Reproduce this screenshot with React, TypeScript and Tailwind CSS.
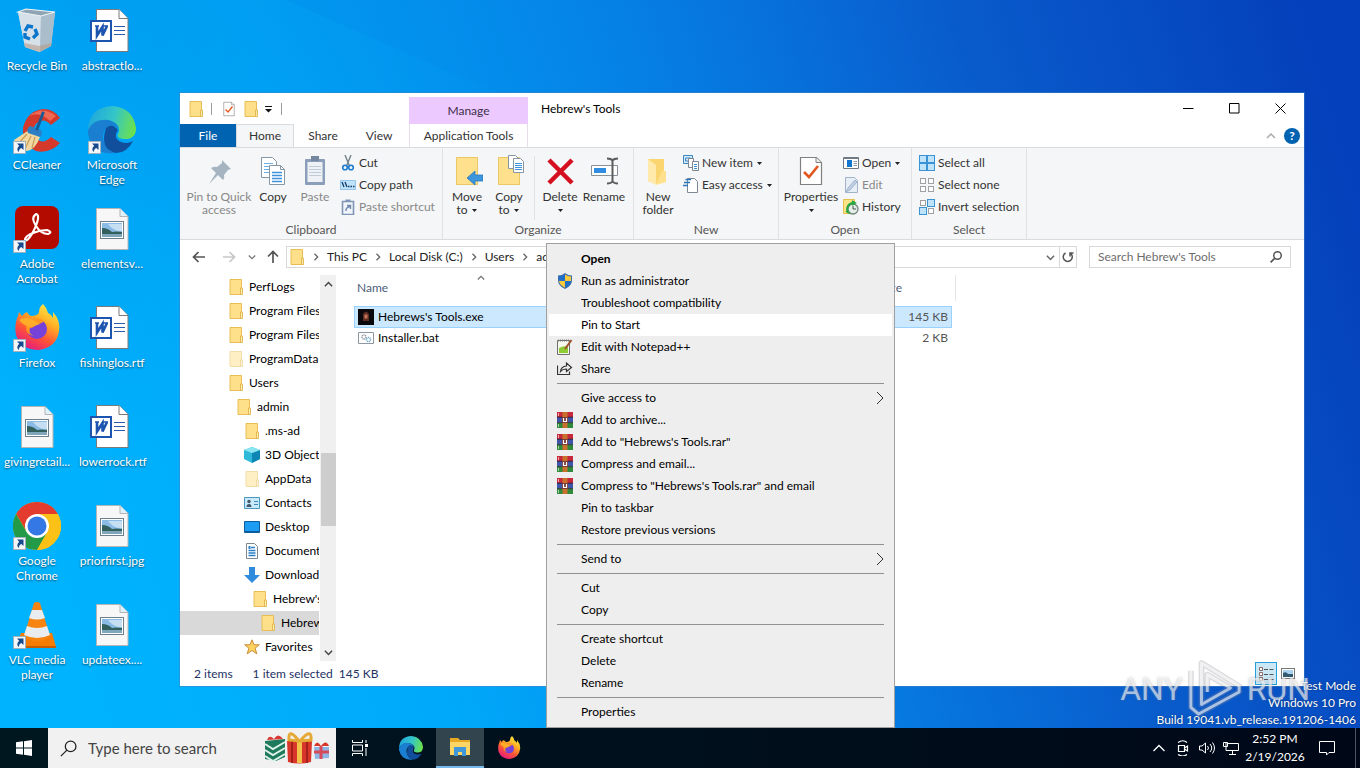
import React from 'react'

type IconProps = { className?: string }

export default function App() {
    return (
        <div className="flex h-screen min-h-[600px] flex-col overflow-hidden font-['Lato','Open_Sans',sans-serif] text-[12px] text-black">
            <main className="relative flex-1 bg-[#00aefd]">
                <Wallpaper />
                <DesktopIcons />
                <ExplorerWindow />
                <ContextMenu />
                <BuildInfo />
                <Watermark />
            </main>
            <Taskbar />
        </div>
    )
}

function Wallpaper() {
    return (
        <svg className="absolute inset-0 h-full w-full" viewBox="0 0 1360 728" preserveAspectRatio="none" aria-hidden="true">
            <defs>
                <linearGradient id="sky" x1="60" y1="600" x2="1360" y2="200" gradientUnits="userSpaceOnUse">
                    <stop offset="0" stopColor="#00b3fe" />
                    <stop offset=".25" stopColor="#00a9fa" />
                    <stop offset=".5" stopColor="#0584e7" />
                    <stop offset=".75" stopColor="#095ccc" />
                    <stop offset="1" stopColor="#0440bb" />
                </linearGradient>
                <radialGradient id="top" cx="100" cy="-60" r="520" gradientUnits="userSpaceOnUse">
                    <stop offset="0" stopColor="#0080dc" stopOpacity=".35" />
                    <stop offset="1" stopColor="#0080dc" stopOpacity="0" />
                </radialGradient>
                <linearGradient id="beam" x1="0" y1="0" x2="1" y2="0">
                    <stop offset="0" stopColor="#0078e0" stopOpacity=".15" />
                    <stop offset=".8" stopColor="#0078e0" stopOpacity="0" />
                </linearGradient>
            </defs>
            <rect width="1360" height="728" fill="url(#sky)" />
            <rect width="1360" height="728" fill="url(#top)" />
            <path d="M285 0L560 120H1100V0Z" fill="url(#beam)" />
        </svg>
    )
}

/* ---------- desktop ---------- */

const shortcuts = [
    { label: 'Recycle Bin', icon: <RecycleBin />, link: false },
    { label: 'CCleaner', icon: <CCleaner />, link: true },
    { label: 'Adobe Acrobat', icon: <Acrobat />, link: true },
    { label: 'Firefox', icon: <Firefox className="h-12 w-12" id="fx1" />, link: true },
    { label: 'givingretail...', icon: <PictureFile />, link: false },
    { label: 'Google Chrome', icon: <Chrome />, link: true },
    { label: 'VLC media player', icon: <Vlc />, link: true },
    { label: 'abstractlo...', icon: <WordFile />, link: false },
    { label: 'Microsoft Edge', icon: <Edge className="h-12 w-12" id="edge1" />, link: true },
    { label: 'elementsv...', icon: <PictureFile />, link: false },
    { label: 'fishinglos.rtf', icon: <WordFile />, link: false },
    { label: 'lowerrock.rtf', icon: <WordFile />, link: false },
    { label: 'priorfirst.jpg', icon: <PictureFile />, link: false },
    { label: 'updateex....', icon: <PictureFile />, link: false },
]

function DesktopIcons() {
    return (
        <div className="relative grid w-fit grid-flow-col grid-cols-[74px_74px] grid-rows-[repeat(7,99px)] gap-x-px">
            {shortcuts.map((s) => (
                <button key={s.label} className="flex flex-col items-center pt-[7px]">
                    <span className="relative mb-[3px] block h-12 w-12">
                        {s.icon}
                        {s.link && <ShortcutArrow />}
                    </span>
                    <span className="max-w-[66px] text-center leading-[15px] text-white [text-shadow:0_1px_2px_rgba(0,0,0,0.6)]">{s.label}</span>
                </button>
            ))}
        </div>
    )
}

function ShortcutArrow() {
    return (
        <svg className="absolute bottom-0 left-0 h-[13px] w-[13px]" viewBox="0 0 13 13">
            <rect x=".5" y=".5" width="12" height="12" fill="#f4f6f8" stroke="#9fb2c2" />
            <path d="M4 2.500h6.500V9L8.300 6.900Q5.500 8.500 6 11Q2.500 8.500 6.200 4.800Z" fill="#174a8c" />
        </svg>
    )
}

function RecycleBin() {
    return (
        <svg className="h-12 w-12" viewBox="0 0 48 48">
            <path d="M5 5l8-3 29 3-4 34-12 6-14-5z" fill="#c3d3dd" />
            <path d="M5 5l23 4-1 36-15-5z" fill="#d5e0e8" />
            <path d="M28 9l14-4-4 34-11 6z" fill="#a9bdcb" />
            <path d="M5 5l8-3 29 3-14 4z" fill="#8fa5b3" stroke="#eef3f5" strokeWidth="1.200" />
            <path d="M11 36l15 3 13-3-1 3-12 6-14-5z" fill="#b99b8b" opacity=".6" />
            <g fill="none" stroke="#0b76cc" strokeWidth="3.400">
                <path d="M12 24l3-5 5 1" />
                <path d="M22 22l2 5-4 4" />
                <path d="M17 32l-5-2v-4" />
            </g>
        </svg>
    )
}

function CCleaner() {
    return (
        <svg className="h-12 w-12" viewBox="0 0 48 48">
            <path d="M47 12L38 19Q31 11 24 17T25 34Q31 38 38 31L47 37Q37 48 23 45Q9 39 10 22Q14 5 30 3Q41 3 47 12Z" fill="#d5392b" />
            <path d="M43 10Q30-1 16 10Q27 5 37 15Z" fill="#ef6a54" />
            <path d="M16 24L1 34Q2 44 14 45Q22 44 27 31Z" fill="#f3d7a0" />
            <path d="M14 28L5 38M18 30L12 43M22 31L19 42" stroke="#c79c56" strokeWidth="1.200" />
            <path d="M17 20l11 4q2 4-1 7l-12-4q-2-4 2-7z" fill="#2d7fc4" />
            <path d="M24 23L30 7" stroke="#1c5a94" strokeWidth="3" strokeLinecap="round" />
        </svg>
    )
}

function Acrobat() {
    return (
        <svg className="h-12 w-12" viewBox="0 0 48 48">
            <rect x="2" y="1" width="44" height="43" rx="8" fill="#b30b00" />
            <path
                d="M22 10Q18 13 23 21Q28 29 35 29Q40 27 34 25Q27 25 20 28Q12 31 12 35Q14 37 19 29Q26 16 25 11Q24 8 22 10Z"
                fill="none" stroke="#fff" strokeWidth="2.200" strokeLinejoin="round"
            />
        </svg>
    )
}

function Firefox({ className, id }: { className: string; id: string }) {
    return (
        <svg className={className} viewBox="0 0 48 48">
            <defs>
                <linearGradient id={id} x1=".8" y1="0" x2=".25" y2="1">
                    <stop offset="0" stopColor="#fff14a" />
                    <stop offset=".35" stopColor="#ffae24" />
                    <stop offset=".65" stopColor="#ff5436" />
                    <stop offset="1" stopColor="#e31587" />
                </linearGradient>
            </defs>
            <path
                d="M30 0Q34 4 35 9Q38 10 40 14V8Q48 17 46 27Q44 43 26 46Q8 46 3 31Q1 20 5 12L6 8L9 12Q11 9 14 8Q16 12 19 12Q26 11 26 8Q26 3 30 0Z"
                fill={`url(#${id})`}
            />
            <circle cx="24" cy="25" r="10" fill="#7541d8" />
            <path d="M16 18Q23 11 31 17Q29 20 23 20Q21 24 17 24Q15 30 21 32Q13 31 13 23Q13 20 16 18Z" fill="#ff9620" />
            <path d="M6 16Q14 11 22 17L27 20Q22 22 18 23Q12 23 6 16Z" fill="#ffac28" />
        </svg>
    )
}

function Edge({ className, id }: { className: string; id: string }) {
    return (
        <svg className={className} viewBox="0 0 48 48">
            <defs>
                <linearGradient id={id} x1="0" y1=".4" x2="1" y2=".6">
                    <stop offset="0" stopColor="#1fa7dd" />
                    <stop offset=".5" stopColor="#34c5c8" />
                    <stop offset="1" stopColor="#6de24a" />
                </linearGradient>
            </defs>
            <path d="M0 24Q1 1 25 0Q45 2 48 22Q48 34 35 33Q27 32 31 26Q32 17 20 14Q7 13 0 24Z" fill={`url(#${id})`} />
            <path d="M0 24Q6 12 20 14Q29 16 31 23Q24 16 18 22Q11 31 20 43Q23 46 28 47Q5 50 0 28Z" fill="#1a7fd0" />
            <path d="M18 22Q24 16 30 24Q25 31 31 35Q38 39 45 35Q39 47 28 47Q11 43 18 22Z" fill="#114f9d" />
        </svg>
    )
}

function Chrome() {
    return (
        <svg className="h-12 w-12" viewBox="0 0 48 48">
            <circle cx="24" cy="24" r="24" fill="#fbc116" />
            <path d="M3.200 12A24 24 0 0 1 44.800 12H24L14 30Z" fill="#e33b2e" />
            <path d="M3.200 12A24 24 0 0 0 24 48L34.400 30H13.600Z" fill="#229a47" />
            <path d="M44.800 12A24 24 0 0 1 24 48L34.400 30V18L24 12Z" fill="#fbc116" />
            <circle cx="24" cy="24" r="12" fill="#fff" />
            <circle cx="24" cy="24" r="9.500" fill="#3478e5" />
        </svg>
    )
}

function Vlc() {
    return (
        <svg className="h-12 w-12" viewBox="0 0 48 48">
            <path d="M8 32h31l4 14H3z" fill="#f57c00" />
            <path d="M3 45h40v2H3z" fill="#c85d00" />
            <path d="M21 2Q24 0 27 2L37 35Q24 46 11 35Z" fill="#f78411" />
            <path d="M19 9h10l3 8q-8 3-16 0z" fill="#e9edf0" />
            <path d="M14 25q10 4 20 0l3 9q-13 6-26 0z" fill="#e9edf0" />
        </svg>
    )
}

function PictureFile() {
    return (
        <svg className="h-12 w-12" viewBox="0 0 48 48">
            <path d="M8.500 3.500H32l8 8v33H8.500z" fill="#f7f7f7" stroke="#b5b5b5" />
            <path d="M32 3.500v8h8" fill="#dff1fb" stroke="#b5b5b5" />
            <rect x="12.500" y="16.500" width="23" height="17" fill="#fff" stroke="#6d7f8c" />
            <path d="M14 18h20v14H14z" fill="#8abbe4" />
            <path d="M20 19h14v7q-8 1-14-7z" fill="#c5def2" />
            <path d="M14 23q6 0 10 4 4-1 10 0v3H14z" fill="#33605c" />
            <path d="M14 29h20v3H14z" fill="#7fa6bb" />
        </svg>
    )
}

function WordFile() {
    return (
        <svg className="h-12 w-12" viewBox="0 0 48 48">
            <path d="M8.500 2.500H31l9 9v33H8.500z" fill="#fff" stroke="#7a7a7a" />
            <path d="M31 2.500v9h9" fill="#fff" stroke="#7a7a7a" />
            <path d="M26 19.500h11M26 23.500h11M26 27.500h11" stroke="#2b5cad" />
            <rect x="3" y="14" width="20" height="20" fill="#fff" stroke="#1c54b0" strokeWidth="2" />
            <path d="M7 19h4M14 19h6" stroke="#1c54b0" strokeWidth="1.500" />
            <path d="M9 19v9.500L14.500 20v8.500L19 19" fill="none" stroke="#1c54b0" strokeWidth="2.600" />
        </svg>
    )
}

/* ---------- explorer window ---------- */

function ExplorerWindow() {
    return (
        <section className="absolute top-[93px] right-14 bottom-[42px] left-[180px] flex flex-col overflow-hidden bg-white shadow-[0_0_0_1px_rgba(70,130,190,0.5)]">
            <TitleBar />
            <RibbonTabs />
            <Ribbon />
            <AddressBar />
            <div className="flex min-h-0 flex-1">
                <FolderTree />
                <FileList />
            </div>
            <StatusBar />
        </section>
    )
}

function TitleBar() {
    return (
        <header className="flex h-[31px] shrink-0 pr-px">
            <div className="flex w-[229px] items-center pl-2">
                <Folder />
                <span className="ml-[7px] h-3 w-px bg-[#9a9a9a]" />
                <span className="ml-[9px]"><PropertiesPage className="h-4 w-4" /></span>
                <button className="ml-[6px]" aria-label="New folder"><Folder /></button>
                <button className="ml-[2px] flex h-4 w-4 items-center justify-center" aria-label="Customize toolbar">
                    <svg className="h-2 w-2" viewBox="0 0 8 8"><path d="M0 1.500h7" stroke="#111" /><path d="M0 4h7L3.500 7.500z" fill="#111" /></svg>
                </button>
                <span className="ml-1 h-3 w-px bg-[#9a9a9a]" />
            </div>
            <div className="mt-1 flex w-[119px] items-center justify-center bg-[#ecc9ff] text-[#40304a]">Manage</div>
            <h1 className="flex flex-1 items-center pl-[13px]">Hebrew's Tools</h1>
            <button className="w-[46px]" aria-label="Minimize">
                <svg className="mx-auto h-[11px] w-[11px]" viewBox="0 0 11 11"><path d="M0 5.500h10.500" stroke="#000" /></svg>
            </button>
            <button className="w-[46px]" aria-label="Maximize">
                <svg className="mx-auto h-[11px] w-[11px]" viewBox="0 0 11 11"><path d="M.5.5h9.500v9.500H.5z" fill="none" stroke="#000" /></svg>
            </button>
            <button className="w-[46px]" aria-label="Close">
                <svg className="mx-auto h-[11px] w-[11px]" viewBox="0 0 11 11"><path d="M.5.5l10 10M10.500.5l-10 10" stroke="#000" /></svg>
            </button>
        </header>
    )
}

function RibbonTabs() {
    return (
        <div className="flex h-[23px] shrink-0 text-[#333]">
            <div className="flex w-[229px]">
                <button className="w-14 bg-[#0063b1] text-white">File</button>
                <button className="w-[58px] border-x border-t border-[#dadbdc] bg-[#f5f6f7]">Home</button>
                <button className="w-[58px]">Share</button>
                <button className="w-[54px]">View</button>
            </div>
            <button className="w-[119px] border-x border-[#e6dcea]">Application Tools</button>
            <div className="flex flex-1 items-center justify-end gap-2 pr-1">
                <button aria-label="Collapse ribbon">
                    <svg className="h-2 w-[10px]" viewBox="0 0 10 8"><path d="M1 6l4-4 4 4" fill="none" stroke="#aaa" strokeWidth="1.500" /></svg>
                </button>
                <button className="h-4 w-4 rounded-full bg-[#0063b1] text-[12px] leading-4 font-bold text-white" aria-label="Help">?</button>
            </div>
        </div>
    )
}

function Ribbon() {
    return (
        <div className="flex h-[93px] shrink-0 border-y border-[#dadbdc] bg-[#f5f6f7] text-[#333]">
            <Group name="Clipboard" className="w-[263px]">
                <Big width="w-[72px]" icon={<PinIcon />} label="Pin to Quick access" disabled />
                <Big width="w-9" icon={<CopyIcon />} label="Copy" />
                <Big width="w-12" icon={<PasteIcon />} label="Paste" disabled />
                <div className="ml-px">
                    <Small icon={<Scissors />} label="Cut" />
                    <Small icon={<PathIcon />} label="Copy path" />
                    <Small icon={<PasteLink />} label="Paste shortcut" disabled />
                </div>
            </Group>
            <Group name="Organize" className="w-[191px]">
                <Big width="w-[42px] px-1" icon={<MoveTo />} label="Move to" arrow />
                <Big width="w-[42px] px-1" icon={<CopyTo />} label="Copy to" arrow />
                <span className="mx-1 mt-1 h-16 w-px bg-[#e0e1e2]" />
                <Big width="w-[42px]" icon={<DeleteIcon />} label="Delete" arrow />
                <Big width="w-[46px]" icon={<RenameIcon />} label="Rename" />
            </Group>
            <Group name="New" className="w-[145px]">
                <Big width="w-[42px]" icon={<NewFolder />} label="New folder" />
                <div className="ml-1">
                    <Small icon={<NewItem />} label="New item" arrow />
                    <Small icon={<EasyAccess />} label="Easy access" arrow />
                </div>
            </Group>
            <Group name="Open" className="w-[133px]">
                <Big width="w-[58px]" icon={<PropertiesPage className="h-8 w-8" />} label="Properties" arrow />
                <div className="ml-[3px]">
                    <Small icon={<OpenIcon />} label="Open" arrow />
                    <Small icon={<EditIcon />} label="Edit" disabled />
                    <Small icon={<HistoryIcon />} label="History" />
                </div>
            </Group>
            <Group name="Select" className="w-[115px]">
                <div className="ml-1">
                    <Small icon={<Tiles kind="all" />} label="Select all" />
                    <Small icon={<Tiles kind="none" />} label="Select none" />
                    <Small icon={<Tiles kind="invert" />} label="Invert selection" />
                </div>
            </Group>
        </div>
    )
}

function Group({ name, className, children }: { name: string; className: string; children: React.ReactNode }) {
    return (
        <div className={`flex shrink-0 flex-col border-r border-[#e0e1e2] pt-1 ${className}`}>
            <div className="flex flex-1 items-start pl-[3px]">{children}</div>
            <div className="h-[18px] text-center leading-[18px] text-[#555]">{name}</div>
        </div>
    )
}

type ButtonProps = { icon: React.ReactNode; label: string; arrow?: boolean; disabled?: boolean }

function Big({ icon, label, arrow, disabled, width }: ButtonProps & { width: string }) {
    return (
        <button className={`flex shrink-0 flex-col items-center pt-[3px] ${width} ${disabled ? 'text-[#888]' : ''}`}>
            <span className="mb-[3px] block h-8 w-8">{icon}</span>
            <span className="text-center leading-[13px]">
                {label}
                {arrow && <> <Caret /></>}
            </span>
        </button>
    )
}

function Small({ icon, label, arrow, disabled }: ButtonProps) {
    return (
        <button className={`flex h-[22px] items-center gap-[3px] whitespace-nowrap ${disabled ? 'text-[#888]' : ''}`}>
            <span className="block h-4 w-4">{icon}</span>
            {label}
            {arrow && <Caret />}
        </button>
    )
}

function Caret() {
    return <svg className="mx-px inline-block h-[3px] w-[5px] align-middle" viewBox="0 0 5 3"><path d="M0 0h5L2.500 3z" fill="#222" /></svg>
}

function AddressBar() {
    const crumbs = ['This PC', 'Local Disk (C:)', 'Users', 'admin']
    return (
        <div className="flex h-[35px] shrink-0 items-center pr-[13px] pb-px pl-3 text-[#222]">
            <button aria-label="Back"><Arrow className="h-[14px] w-[14px] text-[#555]" /></button>
            <button className="ml-4" aria-label="Forward"><Arrow className="h-[14px] w-[14px] rotate-180 text-[#c8c8c8]" /></button>
            <button className="ml-3" aria-label="Recent"><Chevron className="h-2 w-2 rotate-90 text-[#777]" /></button>
            <button className="ml-[10px]" aria-label="Up"><Arrow className="h-[14px] w-[14px] rotate-90 text-[#555]" /></button>
            <div className="ml-[6px] flex h-[22px] flex-1 items-center border border-[#d9d9d9] pl-[2px]">
                <Folder />
                {crumbs.map((c) => (
                    <React.Fragment key={c}>
                        <span className="flex w-[22px] shrink-0 justify-center"><Chevron className="h-2 w-2 text-[#666]" /></span>
                        <a href="#" className="whitespace-nowrap">{c}</a>
                    </React.Fragment>
                ))}
                <span className="flex-1" />
                <button className="px-1" aria-label="Previous locations"><Chevron className="h-[9px] w-[9px] rotate-90 text-[#666]" /></button>
                <button className="flex h-full w-[17px] items-center justify-center border-l border-[#d9d9d9]" aria-label="Refresh">
                    <svg className="h-3 w-3" viewBox="0 0 12 12"><path d="M3.500 2A4.500 4.500 0 1 0 8 2M8 5.500V2h3.500" fill="none" stroke="#555" strokeWidth="1.500" /></svg>
                </button>
            </div>
            <div className="ml-3 flex h-[22px] w-[202px] items-center border border-[#d9d9d9] pr-2 pl-2">
                <input className="min-w-0 flex-1 outline-none placeholder:text-[#6d6d6d]" placeholder="Search Hebrew's Tools" aria-label="Search Hebrew's Tools" />
                <Magnifier className="h-3 w-3 text-[#555]" />
            </div>
        </div>
    )
}

const tree = [
    { name: 'PerfLogs', indent: 'pl-12', icon: <Folder /> },
    { name: 'Program Files', indent: 'pl-12', icon: <Folder /> },
    { name: 'Program Files (x86)', indent: 'pl-12', icon: <Folder /> },
    { name: 'ProgramData', indent: 'pl-12', icon: <Folder faded /> },
    { name: 'Users', indent: 'pl-12', icon: <Folder /> },
    { name: 'admin', indent: 'pl-14', icon: <Folder /> },
    { name: '.ms-ad', indent: 'pl-16', icon: <Folder /> },
    { name: '3D Objects', indent: 'pl-16', icon: <Cube /> },
    { name: 'AppData', indent: 'pl-16', icon: <Folder faded /> },
    { name: 'Contacts', indent: 'pl-16', icon: <ContactCard /> },
    { name: 'Desktop', indent: 'pl-16', icon: <Monitor /> },
    { name: 'Documents', indent: 'pl-16', icon: <DocIcon /> },
    { name: 'Downloads', indent: 'pl-16', icon: <DownArrow /> },
    { name: "Hebrew's Tools", indent: 'pl-[72px]', icon: <Folder /> },
    { name: "Hebrew's Tools", indent: 'pl-20', icon: <Folder />, selected: true },
    { name: 'Favorites', indent: 'pl-16', icon: <Star /> },
]

function FolderTree() {
    return (
        <div className="flex shrink-0">
            <nav className="w-[139px] overflow-hidden">
                {tree.map((t, i) => (
                    <a href="#" key={i} className={`flex h-6 items-center gap-[5px] whitespace-nowrap ${t.indent} ${t.selected ? 'bg-[#d9d9d9]' : ''}`}>
                        <span className="shrink-0">{t.icon}</span>
                        {t.name}
                    </a>
                ))}
            </nav>
            <div className="ml-px flex w-4 flex-col items-center bg-[#f0f0f0]">
                <button className="flex h-[18px] items-center" aria-label="Scroll up"><Chevron className="h-[9px] w-[9px] -rotate-90 text-[#444]" /></button>
                <div className="mt-40 h-[73px] w-[15px] bg-[#cdcdcd]" />
                <button className="mt-auto flex h-[18px] items-center" aria-label="Scroll down"><Chevron className="h-[9px] w-[9px] rotate-90 text-[#444]" /></button>
            </div>
        </div>
    )
}

function FileList() {
    return (
        <div className="flex-1 pl-[18px]">
            <table className="w-[602px] table-fixed border-separate border-spacing-0">
                <thead>
                    <tr className="h-[26px] text-left text-[#4c607a]">
                        <th className="w-[522px] pl-[3px] font-normal">
                            <span className="flex h-[26px] items-center">
                                <span className="w-[120px]">Name</span>
                                <Chevron className="mb-5 h-2 w-2 -rotate-90 text-[#777]" />
                            </span>
                        </th>
                        <th className="border-r border-[#e5e5e5] pl-[5px] font-normal">Size</th>
                    </tr>
                </thead>
                <tbody className="before:block before:h-[5px]">
                    <tr className="h-[22px]">
                        <td className="border border-r-0 border-[#99d1ff] bg-[#cce8ff] pl-[3px]">
                            <span className="flex items-center gap-1"><ExeIcon />Hebrews's Tools.exe</span>
                        </td>
                        <td className="pr-1 text-right text-[#555]">
                            <span className="block h-[22px] border border-l-0 border-[#99d1ff] bg-[#cce8ff] pr-[3px] leading-5">145 KB</span>
                        </td>
                    </tr>
                    <tr className="h-5">
                        <td className="pl-1"><span className="flex items-center gap-1"><BatIcon />Installer.bat</span></td>
                        <td className="pr-2 text-right text-[#555]">2 KB</td>
                    </tr>
                </tbody>
            </table>
        </div>
    )
}

function StatusBar() {
    return (
        <footer className="flex h-[25px] shrink-0 items-center pr-[9px] pl-[14px] text-[#1e3264]">
            <span>2 items</span>
            <span className="ml-5">1 item selected</span>
            <span className="ml-[6px]">145 KB</span>
            <button className="ml-auto flex h-[23px] w-[22px] items-center justify-center border border-[#26a0da] bg-[#cbe8f6]" aria-label="Details view">
                <svg className="h-4 w-4" viewBox="0 0 16 16">
                    <path d="M1.500 1.500h3v3h-3zM1.500 6.500h3v3h-3zM1.500 11.500h3v3h-3z" fill="#fff" stroke="#8a6b66" />
                    <path d="M6 3.500h4M11.500 3.500h4M6 8.500h4M11.500 8.500h4M6 13.500h4M11.500 13.500h4" stroke="#555" />
                </svg>
            </button>
            <button className="ml-1" aria-label="Large icons view">
                <svg className="h-[11px] w-[14px]" viewBox="0 0 14 11">
                    <rect x=".5" y=".5" width="13" height="10" fill="#fff" stroke="#777" />
                    <path d="M2 2h10v4H2z" fill="#a9d2ee" /><path d="M2 5q3-2 5 1h5v3H2z" fill="#335a70" />
                </svg>
            </button>
        </footer>
    )
}

/* ---------- context menu ---------- */

type MenuItem = { label: string; icon?: React.ReactNode; bold?: boolean; hover?: boolean; more?: boolean }

const menu: MenuItem[][] = [
    [
        { label: 'Open', bold: true },
        { label: 'Run as administrator', icon: <Shield /> },
        { label: 'Troubleshoot compatibility' },
        { label: 'Pin to Start', hover: true },
        { label: 'Edit with Notepad++', icon: <Notepad /> },
        { label: 'Share', icon: <ShareIcon /> },
    ],
    [
        { label: 'Give access to', more: true },
        { label: 'Add to archive...', icon: <Rar /> },
        { label: 'Add to "Hebrews\'s Tools.rar"', icon: <Rar /> },
        { label: 'Compress and email...', icon: <Rar /> },
        { label: 'Compress to "Hebrews\'s Tools.rar" and email', icon: <Rar /> },
        { label: 'Pin to taskbar' },
        { label: 'Restore previous versions' },
    ],
    [{ label: 'Send to', more: true }],
    [{ label: 'Cut' }, { label: 'Copy' }],
    [{ label: 'Create shortcut' }, { label: 'Delete' }, { label: 'Rename' }],
    [{ label: 'Properties' }],
]

function ContextMenu() {
    return (
        <div role="menu" className="absolute top-[243px] left-[546px] w-[349px] border border-[#a0a0a0] bg-[#eee] px-[2px] py-1">
            {menu.map((items, i) => (
                <div key={i}>
                    {i > 0 && <hr className="mx-2 my-[3px] border-[#919191]" />}
                    {items.map((m) => (
                        <button key={m.label} role="menuitem" className={`flex h-[22px] w-full items-center pr-2 pl-2 text-left ${m.hover ? 'bg-white' : ''}`}>
                            <span className="mr-2 block h-4 w-4">{m.icon}</span>
                            <span className={m.bold ? 'flex-1 font-bold' : 'flex-1'}>{m.label}</span>
                            {m.more && (
                                <svg className="h-[14px] w-2" viewBox="0 0 8 14"><path d="M1 1l6 6-6 6" fill="none" stroke="#333" /></svg>
                            )}
                        </button>
                    ))}
                </div>
            ))}
        </div>
    )
}

/* ---------- overlays ---------- */

function BuildInfo() {
    return (
        <div className="absolute right-1 bottom-0 text-right text-[12px] leading-[17px] text-white [text-shadow:0_0_2px_rgba(0,0,0,0.5)]">
            <p>Test Mode</p>
            <p>Windows 10 Pro</p>
            <p>Build 19041.vb_release.191206-1406</p>
        </div>
    )
}

function Watermark() {
    return (
        <div className="pointer-events-none absolute right-[50px] bottom-2 flex items-center gap-1 font-['Roboto',sans-serif] text-[32px] leading-[60px] text-white/60 [text-shadow:0_0_3px_rgba(120,120,130,0.5)]">
            <span>ANY</span>
            <svg className="h-[62px] w-[56px]" viewBox="0 0 58 62">
                <g fill="none" strokeLinejoin="round">
                    <path d="M4 12v38l8 7 42-23v-6L15 4v43l30-17-24-14v18" stroke="#8c8c96" strokeOpacity=".3" strokeWidth="6" />
                    <path d="M4 12v38l8 7 42-23v-6L15 4v43l30-17-24-14v18" stroke="#fff" strokeOpacity=".6" strokeWidth="3" />
                </g>
            </svg>
            <span>RUN</span>
        </div>
    )
}

/* ---------- taskbar ---------- */

function Taskbar() {
    return (
        <footer className="flex h-10 shrink-0 items-stretch bg-linear-to-r from-[#001720] to-[#000818] text-white">
            <button className="flex w-12 items-center justify-center" aria-label="Start">
                <svg className="h-4 w-4" viewBox="0 0 16 16"><path d="M0 2.300l7-1v6.200H0zM8 1.200L16 0v7.500H8zM0 8.500h7v6.200l-7-1zM8 8.500h8V16l-8-1.200z" fill="#fff" /></svg>
            </button>
            <label className="flex w-72 items-center bg-[#f1f1f1] pr-1 pl-3 text-[#444]">
                <Magnifier className="h-[17px] w-[17px] text-[#222]" thin />
                <input className="ml-[11px] min-w-0 flex-1 text-[15px] outline-none placeholder:text-[#444]" placeholder="Type here to search" aria-label="Type here to search" />
                <Gifts />
            </label>
            <button className="flex w-12 items-center justify-center" aria-label="Task view">
                <svg className="h-4 w-4" viewBox="0 0 16 16"><path d="M.5 0v2.500h10V0M.5 16v-2.500h10V16M.5 5h10v6H.5zM14 0v3M14 8v8" fill="none" stroke="#fff" /><path d="M13 4h3v3h-3z" fill="#fff" /></svg>
            </button>
            <button className="ml-[3px] flex w-12 items-center justify-center" aria-label="Microsoft Edge"><Edge className="h-6 w-6" id="edge2" /></button>
            <button className="ml-px flex w-12 items-center justify-center border-b-2 border-[#76b9ed] bg-[#32454e]" aria-label="File Explorer"><ExplorerIcon /></button>
            <button className="ml-px flex w-12 items-center justify-center" aria-label="Firefox"><Firefox className="h-6 w-6" id="fx2" /></button>
            <div className="ml-auto flex items-center gap-2">
                <svg className="h-4 w-4" viewBox="0 0 16 16"><path d="M2.500 11L8 5.500l5.500 5.500" fill="none" stroke="#fff" strokeWidth="1.300" /></svg>
                <svg className="h-4 w-4" viewBox="0 0 16 16"><path d="M3.500 5.500h6v6h-6zM9.500 8l3-2v5l-3-2M3 2.500Q8-1 12 2.500M3 14.500q5 3 9 0" fill="none" stroke="#fff" strokeWidth="1.200" /></svg>
                <svg className="h-4 w-4" viewBox="0 0 16 16"><path d="M.5 6v4h2.500l3.500 3V3L3 6zM8.500 6q2 2 0 4M11 4q3.500 4 0 8M13.500 2.500q4 5.500 0 11" fill="none" stroke="#fff" /></svg>
                <svg className="h-4 w-4" viewBox="0 0 16 16"><path d="M5 3.500h10.500v7H3V7M9.500 10.500V14M6 14.500h7M.5 2.500h4v4h-4zM3 2.500v4" fill="none" stroke="#fff" /></svg>
            </div>
            <div className="ml-[6px] w-[60px] self-center text-center leading-[18px]">
                <p>2:52 PM</p>
                <p>2/19/2026</p>
            </div>
            <button className="flex w-11 items-center justify-center" aria-label="Notifications">
                <svg className="h-4 w-4" viewBox="0 0 16 16"><path d="M.5 1.500h15v11H10L7.500 15V12.500h-7z" fill="none" stroke="#fff" /></svg>
            </button>
            <span className="mr-1 ml-[6px] w-px bg-[#4c5560]" />
        </footer>
    )
}

function ExplorerIcon() {
    return (
        <svg className="h-6 w-6" viewBox="0 0 24 24">
            <path d="M2 3h8l2 2h10v15H2z" fill="#e9a824" />
            <path d="M2 7h20v13H2z" fill="#ffd666" />
            <path d="M6 12h12v9h-4v-4h-4v4H6z" fill="#3f97d8" />
        </svg>
    )
}

function Gifts() {
    return (
        <svg className="h-8 w-[68px]" viewBox="0 0 68 32">
            <path d="M1 9l20-2v18L12 29 1 27z" fill="#1f7a5c" />
            <path d="M1 12l8 5 12-7M1 18l8 5 12-7M1 24l8 5 12-7" fill="none" stroke="#dff2ea" strokeWidth="2" />
            <path d="M3 8q2-6 7-1q4-7 9 0z" fill="#d9372f" />
            <path d="M23 9h25l-1 21q-12 3-23 0z" fill="#d8352b" />
            <path d="M28 9v22M43 9v22" stroke="#a51f1b" strokeWidth="2" />
            <path d="M33 9h5v22h-5z" fill="#f3c24b" />
            <path d="M35 9Q24-5 25 8zM36 9Q48-5 47 8z" fill="none" stroke="#e5a935" strokeWidth="3" />
            <path d="M50 15h15v11l-14 1z" fill="#8fb7e6" />
            <path d="M57 14v13M50 20h15" stroke="#d64a5a" strokeWidth="3" />
            <path d="M50 14q3-7 7 0q5-7 8 0z" fill="#d8352b" />
        </svg>
    )
}

/* ---------- small icons ---------- */

function Folder({ faded }: { faded?: boolean }) {
    return (
        <svg className={`h-4 w-4 ${faded ? 'opacity-50' : ''}`} viewBox="0 0 16 16">
            <path d="M2 .5h11.500v15H2z" fill="#ffe08a" stroke="#e8bd55" />
            <path d="M12.500 9h2v6.500h-2z" fill="#ffe9a6" stroke="#dcae43" strokeWidth=".8" />
        </svg>
    )
}

function PropertiesPage({ className }: IconProps) {
    return (
        <svg className={className} viewBox="0 0 32 32">
            <path d="M5.500 2.500h16l5 5v22h-21z" fill="#fff" stroke="#808080" strokeWidth="1.200" />
            <path d="M21 2.500v5h5.500" fill="#eee" stroke="#808080" />
            <path d="M9 17l5 5 9-11" fill="none" stroke="#e2571f" strokeWidth="2.600" />
        </svg>
    )
}

function Arrow({ className }: IconProps) {
    return <svg className={className} viewBox="0 0 14 14"><path d="M13 7H2M6.500 2L1.500 7l5 5" fill="none" stroke="currentColor" strokeWidth="1.700" /></svg>
}

function Chevron({ className }: IconProps) {
    return <svg className={className} viewBox="0 0 8 8"><path d="M2.500.8L5.700 4 2.500 7.200" fill="none" stroke="currentColor" strokeWidth="1.300" /></svg>
}

function Magnifier({ className, thin }: IconProps & { thin?: boolean }) {
    return (
        <svg className={className} viewBox="0 0 16 16">
            <circle cx="10" cy="6" r="5" fill="none" stroke="currentColor" strokeWidth={thin ? 1.2 : 2} />
            <path d="M6.500 9.500L.8 15.200" stroke="currentColor" strokeWidth={thin ? 1.2 : 2.2} />
        </svg>
    )
}

function PinIcon() {
    return (
        <svg className="h-8 w-8" viewBox="0 0 32 32">
            <path d="M19 5l9 9-3 1-4 5q1 3-1 5l-5-5-9 9 7-11-5-5q3-2 6-1l5-4z" fill="#a6b4c2" />
        </svg>
    )
}

function CopyIcon() {
    return (
        <svg className="h-8 w-8" viewBox="0 0 32 32">
            <path d="M4.500 2.500h11l4 4v16h-15z" fill="#fff" stroke="#8796a3" />
            <path d="M7 8.500h9M7 11.500h9M7 14.500h9M7 17.500h9" stroke="#6bb0e6" />
            <path d="M12.500 10.500h11l4 4v15h-15z" fill="#fff" stroke="#8796a3" />
            <path d="M23.500 10.500v4h4" fill="none" stroke="#8796a3" />
            <path d="M15 17.500h10M15 20.500h10M15 23.500h10M15 26.500h10" stroke="#3c93dc" strokeWidth="1.400" />
        </svg>
    )
}

function PasteIcon() {
    return (
        <svg className="h-8 w-8" viewBox="0 0 32 32">
            <rect x="6" y="4" width="20" height="26" rx="1" fill="#8b9fbb" />
            <path d="M8.500 7h15v20h-15z" fill="#eef2f7" />
            <path d="M12 1h8v5h-8z" fill="#75879e" />
            <path d="M10 11.500h12M10 14.500h12M10 17.500h12M10 20.500h12" stroke="#c2cbd8" />
        </svg>
    )
}

function Scissors() {
    return (
        <svg className="h-4 w-4" viewBox="0 0 16 16">
            <path d="M5 0l4.500 11M11 0L6.500 11" stroke="#72808c" strokeWidth="1.400" />
            <circle cx="5" cy="12.500" r="2.300" fill="none" stroke="#1c7cd0" strokeWidth="1.600" />
            <circle cx="11" cy="12.500" r="2.300" fill="none" stroke="#1c7cd0" strokeWidth="1.600" />
        </svg>
    )
}

function PathIcon() {
    return (
        <svg className="h-4 w-4" viewBox="0 0 16 16">
            <path d="M.5 3.500h15v9H.5z" fill="#bfe2fa" stroke="#94c4e8" />
            <path d="M2 5l2 5M5 5l2 5M8 9.500h1.500M10.500 9.500H12M13 9.500h1.500" stroke="#123c6b" strokeWidth="1.300" />
        </svg>
    )
}

function PasteLink() {
    return (
        <svg className="h-4 w-4" viewBox="0 0 16 16">
            <path d="M2.500 2.500h11v13h-11z" fill="#f1f4f8" stroke="#8096b8" strokeWidth="1.600" />
            <path d="M5.500.5h5v2.500h-5z" fill="#8096b8" />
            <path d="M6 12q-.5-3.500 4-4.500M7 6.500h3.500V10" fill="none" stroke="#6f88b0" strokeWidth="1.400" />
        </svg>
    )
}

function MoveTo() {
    return (
        <svg className="h-8 w-8" viewBox="0 0 32 32">
            <path d="M5.500 2.500h21v27h-21z" fill="#ffe08d" stroke="#ecc766" />
            <path d="M16 23l8-7v4h8v6h-8v4z" fill="#3d95dc" stroke="#2a79bd" strokeWidth=".8" />
        </svg>
    )
}

function CopyTo() {
    return (
        <svg className="h-8 w-8" viewBox="0 0 32 32">
            <path d="M5.500 2.500h21v27h-21z" fill="#ffe08d" stroke="#ecc766" />
            <path d="M15.500.5h7l3 3v10h-10z" fill="#fff" stroke="#8796a3" />
            <path d="M20.500 3.500h7l3 3v11h-10z" fill="#fff" stroke="#8796a3" />
            <path d="M22 8.500h7M22 10.500h7M22 12.500h7M22 14.500h7" stroke="#3c93dc" />
        </svg>
    )
}

function DeleteIcon() {
    return <svg className="h-8 w-8" viewBox="0 0 32 32"><path d="M5 5l23 23M28 5L5 28" stroke="#d40f1f" strokeWidth="4.500" /></svg>
}

function RenameIcon() {
    return (
        <svg className="h-8 w-8" viewBox="0 0 32 32">
            <path d="M3.500 10.500h26v10h-26z" fill="#fff" stroke="#8a9097" />
            <path d="M6 13h12v5H6z" fill="#2f8ce0" />
            <path d="M19 3.500q4 0 5.500 2q1.500-2 5.500-2M24.500 5v22M19 28.500q4 0 5.500-2q1.500 2 5.500 2" fill="none" stroke="#5c5c5c" strokeWidth="2" />
        </svg>
    )
}

function NewFolder() {
    return (
        <svg className="h-8 w-8" viewBox="0 0 32 32">
            <path d="M6 4h16v22l-8 3-8-3z" fill="#fbd56f" />
            <path d="M6 4l8 6v20l-8-4z" fill="#ffe9ab" />
            <path d="M20 16h4v11l-10 3z" fill="#ffe08c" />
        </svg>
    )
}

function NewItem() {
    return (
        <svg className="h-4 w-4" viewBox="0 0 16 16">
            <path d="M.5.5h9v8h-9zM2.500 3h5v3h-5z" fill="#d5ecfb" stroke="#3d86c0" />
            <path d="M5.500 3.500h5v9h-5z" fill="#fff" stroke="#7c8893" />
            <path d="M9.500 6.500h6v9h-6z" fill="#fff" stroke="#7c8893" />
            <path d="M11 9.500h3M11 11.500h3M11 13.500h3" stroke="#3c93dc" />
        </svg>
    )
}

function EasyAccess() {
    return (
        <svg className="h-4 w-4" viewBox="0 0 16 16">
            <path d="M4.500 1.500h7l3 3v11h-10z" fill="#fff" stroke="#7c8893" />
            <path d="M2.500 2.500H8M1 5.500h6M0 8.500h5" stroke="#2b76ba" strokeWidth="1.500" />
        </svg>
    )
}

function OpenIcon() {
    return (
        <svg className="h-4 w-4" viewBox="0 0 16 16">
            <path d="M.5 2.500h15v11H.5z" fill="#fff" stroke="#707a84" />
            <path d="M.5 3.500h15" stroke="#707a84" />
            <path d="M4 5h5v7H4z" fill="#1176ce" />
            <path d="M10.500 6.500h3.500M10.500 8.500h3.500M10.500 10.500h3.500" stroke="#8c98a4" />
        </svg>
    )
}

function EditIcon() {
    return (
        <svg className="h-4 w-4" viewBox="0 0 16 16">
            <path d="M2.500.5h9l3 3v12h-12z" fill="#e8eef5" stroke="#a2b2c8" />
            <path d="M3 15l2-4L12 3l2 2-7 8z" fill="#bfd0e4" stroke="#95aac6" strokeWidth=".8" />
        </svg>
    )
}

function HistoryIcon() {
    return (
        <svg className="h-4 w-4" viewBox="0 0 16 16">
            <path d="M.5.5h11v14H.5z" fill="#ffe487" stroke="#e5c04c" />
            <circle cx="10" cy="10" r="5" fill="#e5efe6" stroke="#72847c" strokeWidth="1.300" />
            <path d="M10 7v3h3" fill="none" stroke="#455" />
            <path d="M10 4A6 6 0 0 0 5 13l-2-1M9 2l3 2-3 2" fill="none" stroke="#28a745" strokeWidth="2" />
        </svg>
    )
}

function Tiles({ kind }: { kind: 'all' | 'none' | 'invert' }) {
    const cells = [[0, 0], [8, 0], [0, 8], [8, 8]]
    const on = { all: [true, true, true, true], none: [false, false, false, false], invert: [false, true, true, false] }[kind]
    return (
        <svg className="h-4 w-4" viewBox="0 0 16 16">
            {cells.map(([x, y], i) =>
                on[i] ? (
                    <rect key={i} x={x + 0.5} y={y + 0.5} width="7" height="7" fill="#bfe3fb" stroke="#3a93d4" />
                ) : (
                    <rect key={i} x={x + 1.5} y={y + 1.5} width="5" height="5" fill="#fff" stroke="#a0a0a0" />
                )
            )}
        </svg>
    )
}

function Cube() {
    return (
        <svg className="h-4 w-4" viewBox="0 0 16 16">
            <path d="M8 0l8 3v9l-8 4-8-4V3z" fill="#2fb9d8" />
            <path d="M8 6l8-3v9l-8 4z" fill="#0e86b5" />
            <path d="M0 3l8-3 8 3-8 3z" fill="#8be6f2" />
        </svg>
    )
}

function ContactCard() {
    return (
        <svg className="h-4 w-4" viewBox="0 0 16 16">
            <path d="M.5 2.500h15v11H.5z" fill="#c8eafa" stroke="#4b95be" />
            <circle cx="5" cy="6.500" r="1.700" fill="#405a6b" />
            <path d="M2.500 12q0-3 2.500-3t2.500 3z" fill="#405a6b" />
            <path d="M10 6.500h4M10 9.500h4" stroke="#3b87bd" />
        </svg>
    )
}

function Monitor() {
    return (
        <svg className="h-4 w-4" viewBox="0 0 16 16">
            <path d="M.5 2.500h15v11H.5z" fill="#1c9df3" stroke="#0c5c9c" />
            <path d="M1 12h14v1H1z" fill="#0c5c9c" />
        </svg>
    )
}

function DocIcon() {
    return (
        <svg className="h-4 w-4" viewBox="0 0 16 16">
            <path d="M2.500.5h8l3 3v12h-11z" fill="#fff" stroke="#7c8893" />
            <path d="M7 4.500h4M4.500 7.500h7M4.500 10h7M4.500 12.500h7" stroke="#2b7fc5" strokeWidth="1.300" />
            <path d="M4.500 3h2v3h-2z" fill="#2b7fc5" />
        </svg>
    )
}

function DownArrow() {
    return <svg className="h-4 w-4" viewBox="0 0 16 16"><path d="M5 0h6v8h5l-8 8-8-8h5z" fill="#2f8bdc" /></svg>
}

function Star() {
    return (
        <svg className="h-4 w-4" viewBox="0 0 16 16">
            <path d="M8 .8l2 5h5.300l-4.200 3.400 1.700 5.600L8 11.500l-4.800 3.300 1.700-5.600L.7 5.800H6z" fill="#ffd45e" stroke="#c98c38" />
        </svg>
    )
}

function ExeIcon() {
    return (
        <svg className="h-4 w-4" viewBox="0 0 16 16">
            <path d="M0 0h16v16H0z" fill="#0a0a0e" />
            <path d="M5 12V5q3-5 6 0v7z" fill="#5a2c22" />
            <path d="M6.500 5.500h3v4h-3z" fill="#c8745a" />
        </svg>
    )
}

function BatIcon() {
    return (
        <svg className="h-4 w-4" viewBox="0 0 16 16">
            <path d="M.5 2.500h15v11H.5z" fill="#fff" stroke="#8d979f" />
            <circle cx="6" cy="7" r="2" fill="none" stroke="#8b949c" strokeDasharray="1 .6" strokeWidth="1.500" />
            <circle cx="10.500" cy="9.500" r="2" fill="none" stroke="#6aa5c9" strokeDasharray="1 .6" strokeWidth="1.500" />
        </svg>
    )
}

function Shield() {
    return (
        <svg className="h-4 w-4" viewBox="0 0 16 16">
            <path d="M8 0q3 2.500 7 2.500V7q0 6-7 9Q1 13 1 7V2.500Q5 2.500 8 0z" fill="#3b6ea8" />
            <path d="M8 1.500V8H2V3.500q3.500 0 6-2z" fill="#1f6fc9" />
            <path d="M8 1.500V8h6V3.500q-3.500 0-6-2z" fill="#fbc93d" />
            <path d="M2 8h6v6.800Q2.500 12 2 8z" fill="#fbc93d" />
            <path d="M14 8H8v6.800Q13.500 12 14 8z" fill="#1f6fc9" />
        </svg>
    )
}

function Notepad() {
    return (
        <svg className="h-4 w-4" viewBox="0 0 16 16">
            <path d="M.5 1.500h12v14H.5z" fill="#f6f8ee" stroke="#6f6f6f" />
            <path d="M2 9q5-3 9-1v6H2z" fill="#8ecb35" />
            <path d="M1 1.500h11" stroke="#777" strokeDasharray="1 1" strokeWidth="2" />
            <path d="M14.500 1L8 10" stroke="#a0522d" strokeWidth="2" />
        </svg>
    )
}

function ShareIcon() {
    return (
        <svg className="h-4 w-4" viewBox="0 0 16 16">
            <path d="M.5 4.500v9h12v-3M3.500 10.500q.5-5 6-5.500V2l5 4.500-5 4V8q-4 0-6 2.500z" fill="none" stroke="#333" strokeWidth="1.200" />
        </svg>
    )
}

function Rar() {
    return (
        <svg className="h-4 w-4" viewBox="0 0 16 16">
            <path d="M0 0h16v5H0z" fill="#c8283c" />
            <path d="M0 5h16v5.500H0z" fill="#3f55a8" />
            <path d="M0 10.500h16V16H0z" fill="#2f8a3c" />
            <path d="M0 5.200h16M0 10.700h16" stroke="#2b1a26" strokeWidth=".8" />
            <path d="M5.500 0h5v16h-5z" fill="#c8702c" />
            <path d="M5 5h6v6H5z" fill="#7a3d3a" />
            <path d="M6.500 6v3.500h3V6" fill="none" stroke="#fff" strokeWidth="1.200" />
            <path d="M1.500 1v3M1.500 12v3" stroke="#fff" strokeOpacity=".6" />
        </svg>
    )
}
